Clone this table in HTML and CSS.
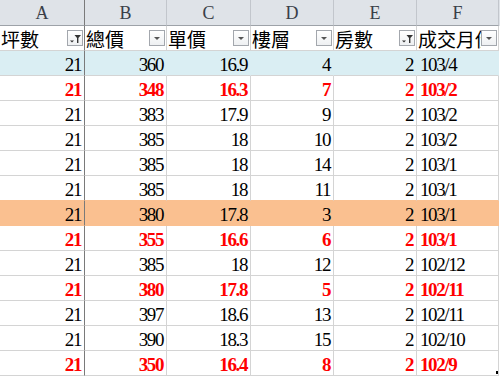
FILE: index.html
```html
<!DOCTYPE html>
<html>
<head>
<meta charset="utf-8">
<link rel="stylesheet" href="styles.css">
</head>
<body>
<div class="sheet">
  <div class="row colhead">
    <div class="cell sep">A</div><div class="cell">B</div><div class="cell">C</div><div class="cell">D</div><div class="cell">E</div><div class="cell">F</div>
  </div>
  <div class="row filters">
    <div class="cell sep"><span class="lbl">坪數</span><span class="fbtn"><svg width="14" height="14" viewBox="0 0 14 14"><path d="M2 9.5h4l-2 2z" fill="#333"/><path d="M6.5 4h6.5l-2.6 3v5h-1.4v-5z" fill="#333"/></svg></span></div>
    <div class="cell"><span class="lbl">總價</span><span class="fbtn"><svg width="14" height="14" viewBox="0 0 14 14"><path d="M4 6h6l-3 3z" fill="#555"/></svg></span></div>
    <div class="cell"><span class="lbl">單價</span><span class="fbtn"><svg width="14" height="14" viewBox="0 0 14 14"><path d="M4 6h6l-3 3z" fill="#555"/></svg></span></div>
    <div class="cell"><span class="lbl">樓層</span><span class="fbtn"><svg width="14" height="14" viewBox="0 0 14 14"><path d="M4 6h6l-3 3z" fill="#555"/></svg></span></div>
    <div class="cell"><span class="lbl">房數</span><span class="fbtn"><svg width="14" height="14" viewBox="0 0 14 14"><path d="M2 9.5h4l-2 2z" fill="#333"/><path d="M6.5 4h6.5l-2.6 3v5h-1.4v-5z" fill="#333"/></svg></span></div>
    <div class="cell"><span class="lbl">成交月份</span><span class="fbtn"><svg width="14" height="14" viewBox="0 0 14 14"><path d="M4 6h6l-3 3z" fill="#555"/></svg></span></div>
  </div>
  <div class="row blue"><div class="cell num sep">21</div><div class="cell num">360</div><div class="cell num">16.9</div><div class="cell num">4</div><div class="cell num">2</div><div class="cell txt">103/4</div></div>
  <div class="row red"><div class="cell num sep">21</div><div class="cell num">348</div><div class="cell num">16.3</div><div class="cell num">7</div><div class="cell num">2</div><div class="cell txt">103/2</div></div>
  <div class="row"><div class="cell num sep">21</div><div class="cell num">383</div><div class="cell num">17.9</div><div class="cell num">9</div><div class="cell num">2</div><div class="cell txt">103/2</div></div>
  <div class="row"><div class="cell num sep">21</div><div class="cell num">385</div><div class="cell num">18</div><div class="cell num">10</div><div class="cell num">2</div><div class="cell txt">103/2</div></div>
  <div class="row"><div class="cell num sep">21</div><div class="cell num">385</div><div class="cell num">18</div><div class="cell num">14</div><div class="cell num">2</div><div class="cell txt">103/1</div></div>
  <div class="row pre-fill"><div class="cell num sep">21</div><div class="cell num">385</div><div class="cell num">18</div><div class="cell num">11</div><div class="cell num">2</div><div class="cell txt">103/1</div></div>
  <div class="row orange"><div class="cell num sep">21</div><div class="cell num">380</div><div class="cell num">17.8</div><div class="cell num">3</div><div class="cell num">2</div><div class="cell txt">103/1</div></div>
  <div class="row red"><div class="cell num sep">21</div><div class="cell num">355</div><div class="cell num">16.6</div><div class="cell num">6</div><div class="cell num">2</div><div class="cell txt">103/1</div></div>
  <div class="row"><div class="cell num sep">21</div><div class="cell num">385</div><div class="cell num">18</div><div class="cell num">12</div><div class="cell num">2</div><div class="cell txt">102/12</div></div>
  <div class="row red"><div class="cell num sep">21</div><div class="cell num">380</div><div class="cell num">17.8</div><div class="cell num">5</div><div class="cell num">2</div><div class="cell txt">102/11</div></div>
  <div class="row"><div class="cell num sep">21</div><div class="cell num">397</div><div class="cell num">18.6</div><div class="cell num">13</div><div class="cell num">2</div><div class="cell txt">102/11</div></div>
  <div class="row"><div class="cell num sep">21</div><div class="cell num">390</div><div class="cell num">18.3</div><div class="cell num">15</div><div class="cell num">2</div><div class="cell txt">102/10</div></div>
  <div class="row red last"><div class="cell num sep">21</div><div class="cell num">350</div><div class="cell num">16.4</div><div class="cell num">8</div><div class="cell num">2</div><div class="cell txt">102/9<span class="handle"></span></div></div>
</div>
</body>
</html>
```

FILE: styles.css
```css
html, body {
  margin: 0;
  padding: 0;
  background: #ffffff;
}
.sheet {
  width: 500px;
  height: 376px;
  overflow: hidden;
  font-family: "Liberation Serif", "Times New Roman", serif;
  color: #000;
}
.row {
  display: grid;
  grid-template-columns: 85px 82px 84px 83px 83px 82px;
  height: 25px;
}
.cell {
  box-sizing: border-box;
  border-right: 1px solid #d4d4d4;
  border-bottom: 1px solid #d4d4d4;
  display: flex;
  min-width: 0;
  overflow: hidden;
  white-space: nowrap;
  position: relative;
}
.cell.sep {
  border-right-color: #7a7a7a;
}
.colhead {
  height: 26px;
  background: #dfe3e8;
}
.colhead .cell {
  border-right-color: #c2c6cc;
  border-bottom-color: #9da2a8;
  justify-content: center;
  align-items: center;
  font-size: 18px;
  color: #3a3f48;
  padding-top: 2px;
}
.colhead .cell.sep {
  border-right-color: #7a7a7a;
}
.filters .cell {
  align-items: center;
  font-family: "Noto Sans CJK TC", "Noto Sans", sans-serif;
  font-size: 19px;
  padding-left: 1px;
  padding-right: 1px;
}
.lbl {
  flex: 1 1 auto;
  min-width: 0;
  overflow: hidden;
  line-height: 24px;
  padding-top: 1px;
}
.fbtn {
  flex: none;
  width: 16px;
  height: 16px;
  box-sizing: border-box;
  border: 1px solid #a3a7ad;
  background: linear-gradient(#ffffff, #eef0f2);
  display: flex;
  align-items: center;
  justify-content: center;
  margin-left: auto;
}
.fbtn svg {
  display: block;
}
.num, .txt {
  font-size: 19px;
  letter-spacing: -1.4px;
  line-height: 20px;
  align-items: flex-end;
}
.num {
  justify-content: flex-end;
  padding-right: 3px;
}
.txt {
  padding-left: 3px;
}
.red .cell {
  color: #ff0000;
  font-weight: bold;
}
.blue .cell {
  background: #daeef3;
  border-right-color: #daeef3;
}
.orange .cell {
  background: #fac090;
  border-right-color: #fac090;
  border-bottom-color: #fac090;
}
.pre-fill .cell {
  border-bottom-color: #fac090;
}
.blue .cell.sep, .orange .cell.sep {
  border-right-color: #7a7a7a;
}
.handle {
  position: absolute;
  right: -1px;
  bottom: 1px;
  width: 3px;
  height: 3px;
  background: #000;
}
```
